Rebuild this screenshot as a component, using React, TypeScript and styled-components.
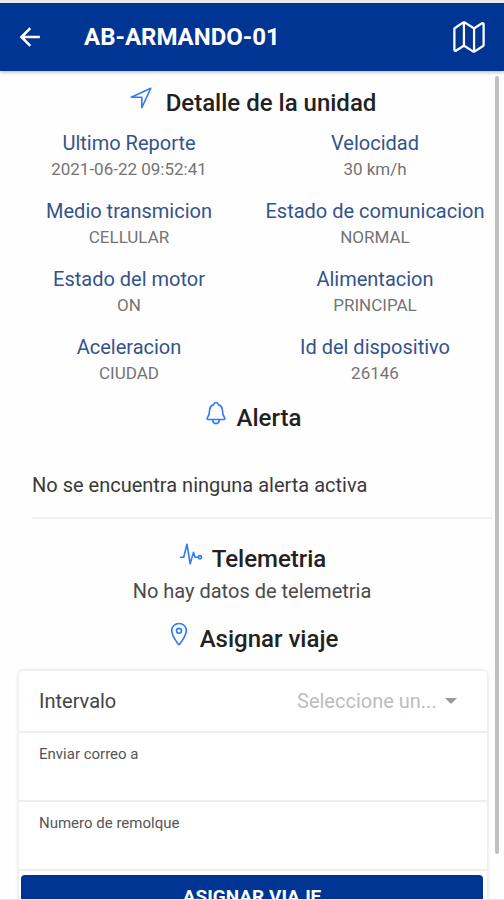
import React from "react";
import styled, { createGlobalStyle } from "styled-components";
import {
  IoArrowBackSharp,
  IoLocationOutline,
  IoMapOutline,
  IoNavigateOutline,
  IoNotificationsOutline,
  IoPulseOutline,
} from "react-icons/io5";

const GlobalStyle = createGlobalStyle`
  * { box-sizing: border-box; }
  body {
    margin: 0;
    background: #fefefe;
    color: #222;
    font-family: Roboto, "Liberation Sans", sans-serif;
  }
  button, input, select { font: inherit; }
`;

const Screen = styled.div`
  position: relative;
  display: flex;
  flex-direction: column;
  height: 100vh;
  overflow: hidden;
  border-top: 3px solid #e9e9ea;
  border-bottom: 1px solid #e4e4ea;
`;

const Toolbar = styled.header`
  display: flex;
  align-items: center;
  flex: none;
  height: 68px;
  padding: 0 17px 0 16px;
  background: #003594;
  color: #fff;
  box-shadow: 0 1px 4px rgba(0, 0, 0, 0.3);
  z-index: 1;
`;

const IconButton = styled.button<{ $size: number }>`
  display: flex;
  padding: 0;
  border: 0;
  background: none;
  color: inherit;
  cursor: pointer;
  font-size: ${(p) => p.$size}px;
`;

const Title = styled.h1`
  flex: 1;
  margin: 0 0 0 40px;
  font-size: 24px;
  font-weight: 700;
`;

const Content = styled.main`
  flex: 1;
  min-height: 0;
  padding-top: 12px;
  overflow-y: auto;
  scrollbar-width: none;
`;

const ScrollThumb = styled.div`
  position: absolute;
  top: 73px;
  right: 5px;
  bottom: 45px;
  width: 4px;
  border-radius: 2px;
  background: #bfbfbf;
`;

const SectionHeading = styled.h2<{ $gap?: number }>`
  display: flex;
  justify-content: center;
  align-items: flex-start;
  gap: ${(p) => p.$gap ?? 8}px;
  margin: 0;
  height: 40px;
  font-size: 24px;
  font-weight: 500;
  line-height: 40px;

  svg {
    flex: none;
    margin-top: 2px;
    color: #2f7cf6;
  }
`;

const Details = styled.dl`
  display: grid;
  grid-template-columns: 1fr 1fr;
  row-gap: 17px;
  margin: 7px 6px 13px;
  text-align: center;
`;

const Label = styled.dt`
  color: #34538c;
  font-size: 20px;
  line-height: 27px;
  white-space: nowrap;
`;

const Value = styled.dd`
  margin: 0;
  color: #747474;
  font-size: 17px;
  line-height: 24px;
`;

const AlertMessage = styled.p`
  margin: 15px 12px 20px 32px;
  padding: 20px 0;
  border-bottom: 2px solid #f0f0f0;
  font-size: 20px;
  line-height: 24px;
  color: #3a3a3a;
`;

const Note = styled.p`
  margin: 0 0 16px;
  text-align: center;
  font-size: 20px;
  line-height: 24px;
  color: #4a4a4a;
`;

const Card = styled.form`
  margin: 12px 17px 0 19px;
  border-radius: 4px;
  background: #fff;
  box-shadow: 0 0 4px rgba(0, 0, 0, 0.16);
`;

const SelectRow = styled.div`
  display: flex;
  align-items: center;
  justify-content: space-between;
  height: 62px;
  padding: 0 30px 0 20px;
  border-bottom: 2px solid #eee;
  font-size: 20px;
  color: #444;
`;

const SelectBox = styled.div`
  display: flex;
  align-items: center;
  gap: 4px;
  color: #999;
`;

const Select = styled.select`
  width: 144px;
  padding: 0;
  border: 0;
  appearance: none;
  background: none;
  color: #bdbdbd;
  text-overflow: ellipsis;
`;

const Field = styled.div`
  display: flex;
  flex-direction: column;
  height: 69px;
  padding: 12px 20px 4px;
  border-bottom: 2px solid #eee;
  font-size: 15px;
  line-height: 18px;
  color: #555;
`;

const Input = styled.input`
  flex: 1;
  min-height: 0;
  padding: 0;
  border: 0;
  outline: 0;
  background: none;
  font-size: 18px;
`;

const SubmitButton = styled.button`
  display: block;
  width: calc(100% - 6px);
  height: 42px;
  margin: 4px 4px 8px 2px;
  padding: 0;
  border: 0;
  border-radius: 4px;
  background: #003594;
  color: #fff;
  font-size: 19px;
  font-weight: 700;
  text-transform: uppercase;
  cursor: pointer;
`;

const unitDetails = [
  ["Ultimo Reporte", "2021-06-22 09:52:41"],
  ["Velocidad", "30 km/h"],
  ["Medio transmicion", "CELLULAR"],
  ["Estado de comunicacion", "NORMAL"],
  ["Estado del motor", "ON"],
  ["Alimentacion", "PRINCIPAL"],
  ["Aceleracion", "CIUDAD"],
  ["Id del dispositivo", "26146"],
];

export default function App() {
  return (
    <Screen>
      <GlobalStyle />
      <Toolbar>
        <IconButton $size={28} aria-label="Regresar">
          <IoArrowBackSharp />
        </IconButton>
        <Title>AB-ARMANDO-01</Title>
        <IconButton $size={36} aria-label="Mapa">
          <IoMapOutline />
        </IconButton>
      </Toolbar>
      <Content>
        <SectionHeading $gap={12}>
          <IoNavigateOutline size={26} />
          Detalle de la unidad
        </SectionHeading>
        <Details>
          {unitDetails.map(([label, value]) => (
            <div key={label}>
              <Label>{label}</Label>
              <Value>{value}</Value>
            </div>
          ))}
        </Details>
        <SectionHeading>
          <IoNotificationsOutline size={26} />
          Alerta
        </SectionHeading>
        <AlertMessage>No se encuentra ninguna alerta activa</AlertMessage>
        <SectionHeading>
          <IoPulseOutline size={26} />
          Telemetria
        </SectionHeading>
        <Note>No hay datos de telemetria</Note>
        <SectionHeading>
          <IoLocationOutline size={26} />
          Asignar viaje
        </SectionHeading>
        <Card onSubmit={(event) => event.preventDefault()}>
          <SelectRow>
            <label htmlFor="interval">Intervalo</label>
            <SelectBox>
              <Select id="interval" defaultValue="">
                <option value="">Seleccione un...</option>
              </Select>
              <svg width="12" height="6" viewBox="0 0 12 6" aria-hidden="true">
                <path d="M0 0h12L6 6z" fill="currentColor" />
              </svg>
            </SelectBox>
          </SelectRow>
          <Field>
            <label htmlFor="email">Enviar correo a</label>
            <Input id="email" type="email" />
          </Field>
          <Field>
            <label htmlFor="trailer">Numero de remolque</label>
            <Input id="trailer" />
          </Field>
          <SubmitButton type="submit">Asignar viaje</SubmitButton>
        </Card>
      </Content>
      <ScrollThumb />
    </Screen>
  );
}
